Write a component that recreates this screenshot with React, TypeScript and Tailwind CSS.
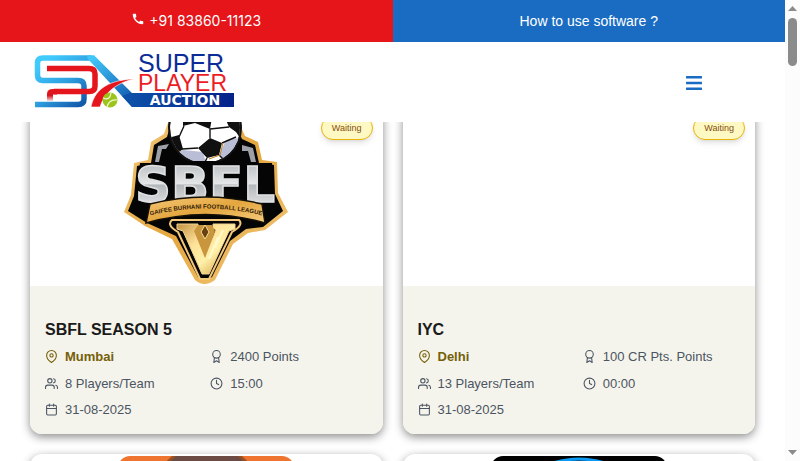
import React from "react";
import { FiAward, FiCalendar, FiClock, FiMapPin, FiUsers } from "react-icons/fi";

function BrandLogo() {
  return (
    <svg viewBox="0 0 200 54" className="h-[54px] w-[200px] overflow-visible" role="img" aria-label="Super Player Auction">
      <defs>
        <linearGradient id="frame" gradientUnits="userSpaceOnUse" x1="0" y1="0" x2="40" y2="54">
          <stop offset="0.15" stopColor="#41cbfd" />
          <stop offset="0.6" stopColor="#2e9fe0" />
          <stop offset="1" stopColor="#1359ac" />
        </linearGradient>
        <linearGradient id="leg" gradientUnits="userSpaceOnUse" x1="60" y1="2" x2="95" y2="50">
          <stop offset="0" stopColor="#41c6f8" />
          <stop offset="1" stopColor="#0d53ab" />
        </linearGradient>
        <linearGradient id="redline" gradientUnits="userSpaceOnUse" x1="12" y1="34" x2="12" y2="47">
          <stop offset="0" stopColor="#e5151d" />
          <stop offset="0.5" stopColor="#d9161f" />
          <stop offset="1" stopColor="#d9161f" stopOpacity="0" />
        </linearGradient>
        <linearGradient id="bar" x1="0" y1="0" x2="1" y2="0">
          <stop offset="0" stopColor="#0d53ab" />
          <stop offset="1" stopColor="#06218a" />
        </linearGradient>
      </defs>
      <path d="M56 3H8Q2.500 3 2.500 8V20Q2.500 25.500 8 25.500H43Q49 25.500 49 31V44Q49 49.500 43 49.500H0" fill="none" stroke="url(#frame)" strokeWidth="5.500" />
      <path d="M53 0.250H59L97 38H199V52H97L52 3Z" fill="url(#leg)" />
      <path d="M95 38H199V52H97L87 41Z" fill="url(#bar)" />
      <path d="M12 13.500H54Q60 13.500 60 19V31Q60 36.500 54 36.500H19" fill="none" stroke="#e5151d" strokeWidth="5.500" />
      <path d="M12 46V39Q12 34 18 34H22V39.500H18V46Z" fill="url(#redline)" />
      <path d="M56 52C59 37 70 25 99 24C81 28 69 38 65 52Z" fill="#e5151d" stroke="#fff" strokeWidth="0.600" />
      <circle cx="75" cy="45" r="7.500" fill="#9cc51c" />
      <path d="M68 43Q75 46 76 38M72 52Q74 44 82 45" fill="none" stroke="#eff6cf" strokeWidth="1.200" />
      <text x="103" y="17" fontSize="25" fill="#0b2c98" className="font-['Liberation_Sans']">SUPER</text>
      <text x="103" y="36" fontSize="23" fill="#ed1c24" className="font-['Liberation_Sans']">PLAYER</text>
      <text x="150" y="50" fontSize="14" textAnchor="middle" fill="#fff" className="font-['DejaVu_Sans'] font-bold">AUCTION</text>
    </svg>
  );
}

function LeagueEmblem() {
  return (
    <svg viewBox="0 0 176 176" className="size-[176px]" role="img" aria-label="SBFL league emblem">
      <defs>
        <linearGradient id="gold" x1="0" y1="0" x2="1" y2="1">
          <stop offset="0" stopColor="#f4c878" />
          <stop offset="0.5" stopColor="#e4a63e" />
          <stop offset="1" stopColor="#f5cd80" />
        </linearGradient>
        <linearGradient id="silver" x1="0" y1="0" x2="0" y2="1">
          <stop offset="0.2" stopColor="#c4c7ca" />
          <stop offset="0.48" stopColor="#e5e7e8" />
          <stop offset="0.5" stopColor="#b4b7ba" />
          <stop offset="1" stopColor="#f4f4f4" />
        </linearGradient>
        <linearGradient id="vee" x1="0" y1="0" x2="1" y2="1">
          <stop offset="0" stopColor="#c29144" />
          <stop offset="0.35" stopColor="#ffe29a" />
          <stop offset="0.6" stopColor="#fff0a8" />
          <stop offset="1" stopColor="#c88a2a" />
        </linearGradient>
        <clipPath id="ball"><circle cx="87" cy="20" r="35" /></clipPath>
        <path id="motto" d="M30 108Q88 93 146 108" />
      </defs>
      <path d="M51 12L46 26L33 34L30 52L16 55L13 87L6 104L27 118L54 131L77 172Q86 180 97 172L115 136L130 125L147 122L170 104L160 85L159 54L144 52L140 34L127 28L120 12Z" fill="url(#gold)" />
      <path d="M54 12L49 29L36 37L33 55L19 58L16 88L10 103L29 115L58 128L80 169Q86 174 94 169L112 133L128 121L145 119L165 103L157 86L156 57L141 55L137 37L124 31L116 12Z" fill="#050505" />
      <path d="M37 54L40 38L51 36L48 41H44L41 54ZM124 37L135 40L138 54H133L130 43H124Z" fill="#9da0a6" />
      <circle cx="87" cy="20" r="37" fill="#111" />
      <g clipPath="url(#ball)">
        <circle cx="87" cy="20" r="35" fill="#fff" />
        <path d="M65 42L85 44L88 55H58L54 46ZM108 32L121 30L123 43L107 55L101 47Z" fill="#b9bdd5" />
        <path d="M65 10H94L92 21L77 15L65 18ZM80 40L92 30L104 35L101 47L89 50ZM50 30L61 27L65 41L56 48ZM108 12L124 10V33L118 24L111 19ZM55 45L64 48L60 56Z" fill="#101010" />
        <path d="M61 29L66 18M64 41L80 40M92 21V30M92 21L111 19M104 35L118 29M89 50L86 56M101 47L107 53" fill="none" stroke="#111" strokeWidth="1.400" />
        <path d="M91 51L102 47L105 35M57 47L62 43" fill="none" stroke="#bf7e24" />
      </g>
      <path d="M22 55H65L72 53H104L110 55H154L156 84L163 102L145 112V98Q88 84 32 97L28 110L13 102L18 86Z" fill="#050505" />
      <text x="87" y="94" fontSize="50" textAnchor="middle" fill="url(#silver)" stroke="#dfe1e2" strokeWidth="1.500" className="font-['DejaVu_Sans'] font-bold">SBFL</text>
      <path d="M32 96Q88 82 144 96L147 115Q88 98 28 115Z" fill="url(#gold)" stroke="#161006" strokeWidth="1.500" />
      <text fontSize="6" fill="#33200a" className="font-['Liberation_Sans'] font-bold">
        <textPath href="#motto" startOffset="50%" textAnchor="middle">GAIFEE BURHANI FOOTBALL LEAGUE</textPath>
      </text>
      <path d="M54 112H121Q126 117 114 124L91 171H82L60 124Q48 117 54 112Z" fill="#050505" stroke="#f2c779" strokeWidth="2" />
      <path d="M59 116H80V120L77 122L87 149L98 122L95 120V116H117V121L111 123L91 166H84L65 123L59 121Z" fill="url(#vee)" stroke="#f5d58e" />
      <path d="M80 117H94L97 123L87 150L76 123Z" fill="#c9963d" />
      <path d="M87 117L91 124L87 131L83 124Z" fill="#684012" stroke="#f8df98" />
      <path d="M100 129L91 151M105 122L97 140" stroke="#fff8c8" strokeWidth="2" />
    </svg>
  );
}

function OrangePoster() {
  return (
    <svg viewBox="0 0 176 176" className="size-[176px] rounded-xl" aria-hidden="true">
      <rect width="176" height="176" fill="#ee7430" />
      <path d="M38 15L54 0H124L140 15V80H20Z" fill="#9a5220" />
      <path d="M42 15L58 0H120L136 15V80H35Z" fill="#6c4b45" />
    </svg>
  );
}

function BlackPoster() {
  return (
    <svg viewBox="0 0 176 176" className="size-[176px] rounded-xl" aria-hidden="true">
      <rect width="176" height="176" fill="#000" />
      <circle cx="88" cy="88" r="85" fill="#051c3c" stroke="#0a9bf5" strokeWidth="3" />
    </svg>
  );
}

type Auction = {
  name: string;
  city: string;
  points: string;
  players: string;
  time: string;
  date: string;
  picture?: React.ReactNode;
};

const auctions: Auction[] = [
  { name: "SBFL SEASON 5", city: "Mumbai", points: "2400 Points", players: "8 Players/Team", time: "15:00", date: "31-08-2025", picture: <LeagueEmblem /> },
  { name: "IYC", city: "Delhi", points: "100 CR Pts. Points", players: "13 Players/Team", time: "00:00", date: "31-08-2025" },
];

const cardClass = "relative overflow-hidden rounded-xl bg-white shadow-[0_3px_10px_rgba(0,0,0,0.45)]";
const factClass = "flex items-center gap-[7px]";
const iconClass = "size-[13px] shrink-0";

function AuctionCard({ auction }: { auction: Auction }) {
  return (
    <article className={cardClass}>
      <div className="flex h-[180px] items-center justify-center">{auction.picture}</div>
      <span className="absolute top-2.5 right-2.5 flex h-6 items-center rounded-full border border-[#eab308] bg-[#fef9c3] px-2.5 pt-px text-[9px] text-[#854d0e] shadow-md">
        Waiting
      </span>
      <div className="bg-[#f5f4ec] px-[15px] pt-8 pb-3.5">
        <h2 className="text-base leading-6 font-bold text-[#1a1a1a]">{auction.name}</h2>
        <ul className="mt-[5px] grid grid-cols-2 gap-x-2 gap-y-[7px] text-[13px] leading-normal text-[#4b5563]">
          <li className={factClass + " font-bold text-[#756008]"}><FiMapPin className={iconClass} />{auction.city}</li>
          <li className={factClass}><FiAward className={iconClass} />{auction.points}</li>
          <li className={factClass}><FiUsers className={iconClass} />{auction.players}</li>
          <li className={factClass}><FiClock className={iconClass} />{auction.time}</li>
          <li className={factClass}><FiCalendar className={iconClass} />{auction.date}</li>
        </ul>
      </div>
    </article>
  );
}

export default function App() {
  return (
    <div className="flex h-screen overflow-hidden bg-white font-['Liberation_Sans',Arial,sans-serif]">
      <div className="flex min-w-0 flex-1 flex-col">
        <div className="grid h-[42px] shrink-0 grid-cols-2 text-sm text-white">
          <a href="tel:+918386011123" className="flex items-center justify-center gap-1 bg-[#e5151a] font-['Inter',sans-serif]">
            <svg viewBox="0 0 24 24" className="mb-1 size-3.5" fill="currentColor" aria-hidden="true">
              <path d="M20.010 15.380c-1.230 0-2.420-.2-3.530-.56a.977.977 0 0 0-1.010.24l-1.570 1.970c-2.830-1.350-5.480-3.900-6.890-6.830l1.950-1.660c.27-.28.35-.67.24-1.020-.37-1.110-.56-2.300-.56-3.530 0-.54-.45-.99-.99-.99H4.190C3.650 3 3 3.240 3 3.990 3 13.280 10.730 21 20.010 21c.71 0 .99-.63.99-1.180v-3.450c0-.54-.45-.99-.99-.99z" />
            </svg>
            +91 83860-11123
          </a>
          <a href="#guide" className="flex items-center justify-center bg-[#196cc2]">How to use software ?</a>
        </div>
        <header className="flex h-20 shrink-0 items-center justify-between bg-white pr-[83px] pl-[35px]">
          <a href="#home"><BrandLogo /></a>
          <button type="button" aria-label="Open menu" className="pt-0.5 text-[#196cc2]">
            <svg viewBox="0 0 16 14" className="h-3.5 w-4" fill="currentColor" aria-hidden="true">
              <rect width="16" height="2.500" rx="0.500" />
              <rect y="5.750" width="16" height="2.500" rx="0.500" />
              <rect y="11.500" width="16" height="2.500" rx="0.500" />
            </svg>
          </button>
        </header>
        <main className="min-h-0 flex-1 overflow-hidden">
          <div className="-mt-4 grid grid-cols-2 gap-5 px-[30px]">
            {auctions.map((auction) => <AuctionCard key={auction.name} auction={auction} />)}
            <article className={cardClass}><div className="flex h-[180px] items-center justify-center"><OrangePoster /></div></article>
            <article className={cardClass}><div className="flex h-[180px] items-center justify-center"><BlackPoster /></div></article>
          </div>
        </main>
      </div>
      <div className="flex w-[15px] shrink-0 flex-col items-center justify-between bg-[#fcfcfc] py-1.5" aria-hidden="true">
        <div className="flex flex-col items-center gap-[7px]">
          <svg viewBox="0 0 9 5" className="h-[5px] w-[9px]"><path d="M4.500 0L9 5H0Z" fill="#8b8b8b" /></svg>
          <div className="h-12 w-[9px] rounded-full bg-[#8b8b8b]" />
        </div>
        <svg viewBox="0 0 9 5" className="h-[5px] w-[9px]"><path d="M0 0H9L4.500 5Z" fill="#8b8b8b" /></svg>
      </div>
    </div>
  );
}
